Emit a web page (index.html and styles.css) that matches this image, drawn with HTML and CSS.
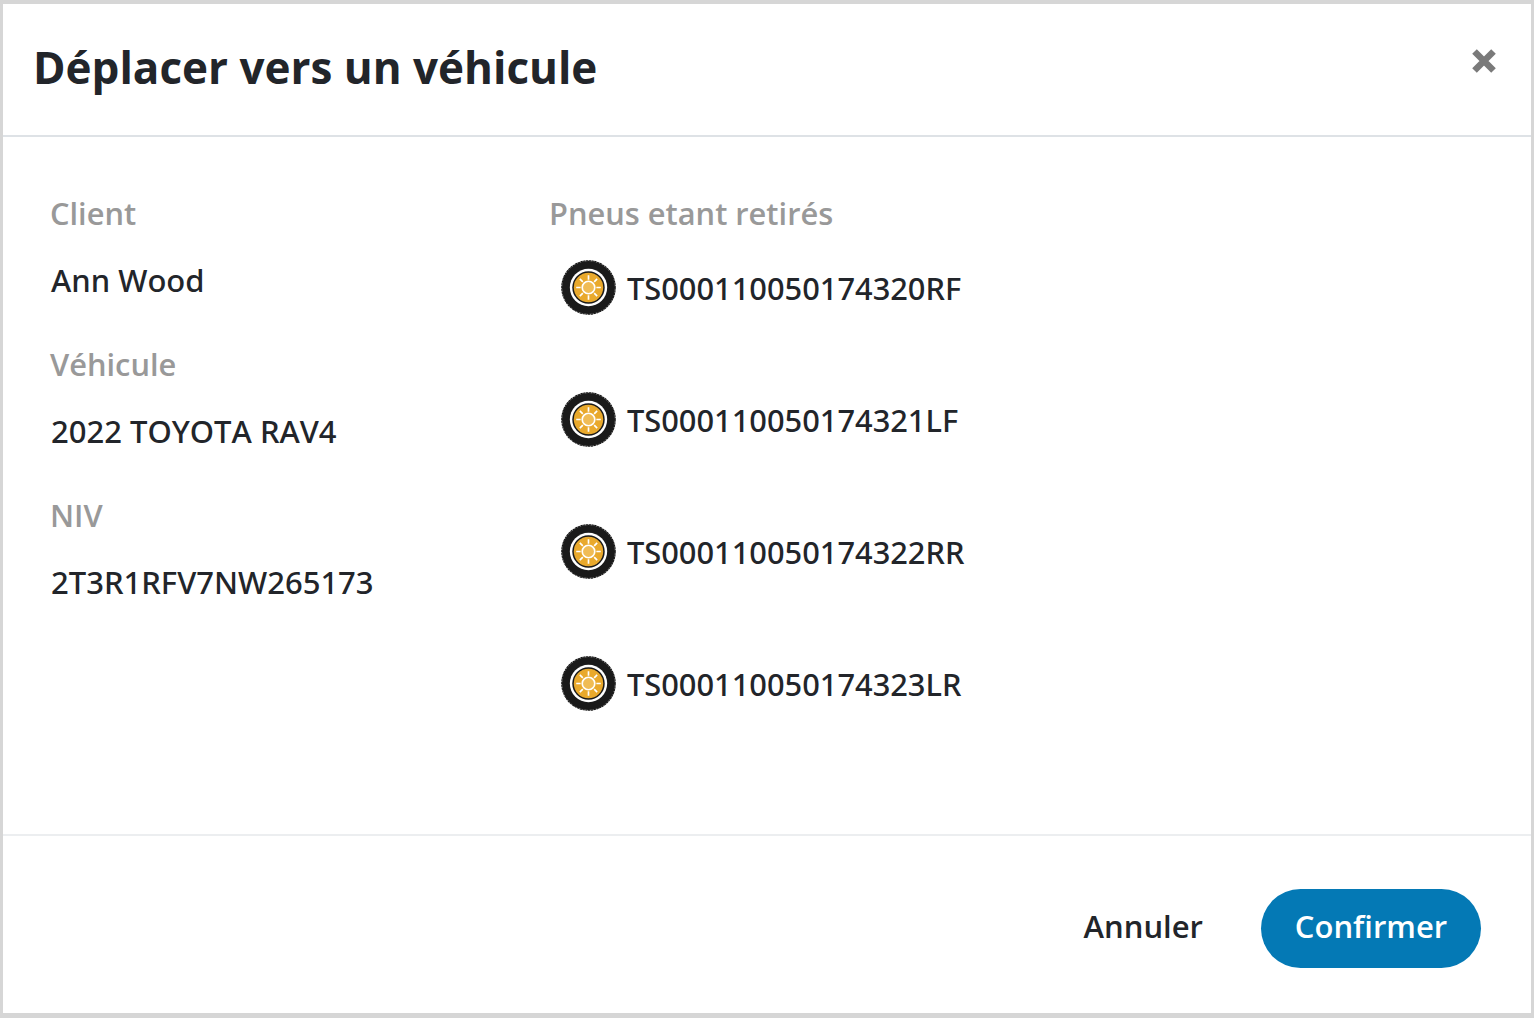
FILE: index.html
```html
<!DOCTYPE html>
<html lang="fr">
<head>
  <meta charset="UTF-8">
  <title>Déplacer vers un véhicule</title>
  <link rel="stylesheet" href="styles.css">
</head>
<body>
  <svg class="sprite" width="0" height="0">
    <symbol id="tire" viewBox="0 0 56 56">
      <circle cx="28" cy="28" r="27.2" fill="none" stroke="#1a1a1a" stroke-width="1.2" stroke-dasharray="2.4 0.5"/>
      <circle cx="28" cy="28" r="27" fill="#1a1a1a"/>
      <circle cx="28" cy="28" r="19" fill="#fff"/>
      <circle cx="28" cy="28" r="16.5" fill="#1a1a1a"/>
      <circle cx="28" cy="28" r="15" fill="#e9a92c"/>
      <circle cx="28" cy="28" r="6.4" fill="#f0bc55" stroke="#fff" stroke-width="1.7"/>
      <path d="M28 15.5v4.5M28 36v4.5M15.5 28h4.5M36 28h4.5M19.2 19.2l3 3M33.8 33.8l3 3M36.8 19.2l-3 3M22.2 33.8l-3 3" stroke="#fff" stroke-width="1.7" fill="none"/>
    </symbol>
  </svg>

  <div class="modal">
    <div class="modal-header">
      <h1>Déplacer vers un véhicule</h1>
      <svg class="close" width="28" height="28" viewBox="0 0 28 28">
        <path d="M4.5 4.5l19 19M23.5 4.5l-19 19" stroke="#7a7a7a" stroke-width="6.5" fill="none"/>
      </svg>
    </div>

    <div class="modal-body">
      <div class="info-col">
        <div class="label">Client</div>
        <div class="value">Ann Wood</div>
        <div class="label">Véhicule</div>
        <div class="value">2022 TOYOTA RAV4</div>
        <div class="label">NIV</div>
        <div class="value">2T3R1RFV7NW265173</div>
      </div>
      <div class="tires-col">
        <div class="label">Pneus etant retirés</div>
        <div class="tire-row">
          <svg class="tire-icon"><use href="#tire"/></svg>
          <span>TS000110050174320RF</span>
        </div>
        <div class="tire-row">
          <svg class="tire-icon"><use href="#tire"/></svg>
          <span>TS000110050174321LF</span>
        </div>
        <div class="tire-row">
          <svg class="tire-icon"><use href="#tire"/></svg>
          <span>TS000110050174322RR</span>
        </div>
        <div class="tire-row">
          <svg class="tire-icon"><use href="#tire"/></svg>
          <span>TS000110050174323LR</span>
        </div>
      </div>
    </div>

    <div class="modal-footer">
      <button class="btn-cancel">Annuler</button>
      <button class="btn-confirm">Confirmer</button>
    </div>
  </div>
</body>
</html>
```

FILE: styles.css
```css
html, body {
  margin: 0;
  padding: 0;
  height: 100%;
}
body {
  font-family: 'Open Sans', sans-serif;
  color: #22252a;
  background: #fff;
}
.sprite {
  display: block;
  height: 0;
}
.modal {
  box-sizing: border-box;
  height: 1018px;
  border: solid #d6d6d6;
  border-width: 4px 3px 5px 3px;
  display: flex;
  flex-direction: column;
  background: #fff;
}
.modal-header {
  height: 133px;
  box-sizing: border-box;
  border-bottom: 2px solid #dee2e6;
  display: flex;
  justify-content: space-between;
  align-items: center;
  padding: 0 33px 0 30px;
}
h1 {
  margin: -6px 0 0;
  font-size: 44px;
  font-weight: 700;
  line-height: 60px;
  color: #22252a;
}
.close {
  margin-top: -18px;
}
.modal-body {
  flex: 1;
  display: flex;
  padding: 53px 48px 0;
}
.info-col {
  width: 499px;
}
.label {
  font-size: 30.8px;
  font-weight: 600;
  line-height: 46px;
  color: #999;
  margin-left: -1px;
}
.value {
  font-family: 'Noto Sans', sans-serif;
  font-kerning: none;
  font-size: 31px;
  font-weight: 500;
  line-height: 46px;
  margin: 21px 0 38px;
  color: #22252a;
}
.tire-row {
  display: flex;
  align-items: center;
  gap: 11px;
  height: 55px;
  margin: 24px 0 77px 11px;
  font-family: 'Noto Sans', sans-serif;
  font-size: 30.8px;
  font-weight: 500;
  color: #22252a;
}
.tire-row + .tire-row {
  margin-top: 0;
}
.tire-icon {
  width: 55px;
  height: 55px;
  flex: none;
}
.modal-footer {
  height: 179px;
  box-sizing: border-box;
  border-top: 2px solid #eceef0;
  display: flex;
  justify-content: flex-end;
  align-items: center;
  gap: 58px;
  padding: 8px 50px 0 0;
}
button {
  font-family: 'Open Sans', sans-serif;
  font-size: 31px;
  font-weight: 600;
  border: none;
  cursor: pointer;
  padding: 0 0 6px;
}
.btn-cancel {
  background: none;
  color: #22252a;
}
.btn-confirm {
  width: 220px;
  height: 79px;
  border-radius: 40px;
  background: #0479b5;
  color: #fff;
}
```
